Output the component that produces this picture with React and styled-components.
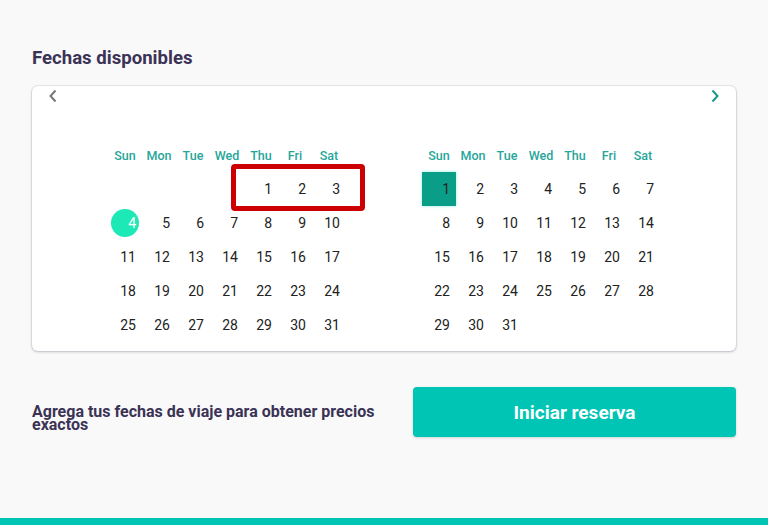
import React from "react";
import styled, { createGlobalStyle } from "styled-components";

const Global = createGlobalStyle`
  body {
    margin: 0;
    background: #f9f9f9;
    font-family: Roboto, "Liberation Sans", sans-serif;
  }
`;

const Page = styled.div`
  min-height: 100vh;
  display: flex;
  flex-direction: column;
`;

const Content = styled.div`
  padding: 47px 32px 0;
`;

const Title = styled.h2`
  margin: 0 0 17px;
  font-size: 18.6px;
  line-height: 22px;
  font-weight: 700;
  color: #3b3355;
`;

const Card = styled.div`
  background: #fff;
  border-radius: 6px;
  box-shadow: 0 0 0 1px rgba(60, 60, 90, 0.08), 0 1px 3px rgba(40, 40, 70, 0.25);
  padding-bottom: 9px;
`;

const Nav = styled.div`
  display: flex;
  justify-content: space-between;
  align-items: center;
  height: 19px;
  padding: 0 15px;
`;

const NavButton = styled.span`
  display: flex;
  width: 12px;
  justify-content: center;
  color: ${(p) => p.color};
`;

const Months = styled.div`
  display: flex;
  justify-content: center;
  gap: 76px;
  margin-top: 33px;
`;

const Month = styled.div`
  position: relative;
  display: grid;
  grid-template-columns: repeat(7, 34px);
  grid-auto-rows: 34px;
`;

const WeekDay = styled.div`
  display: flex;
  align-items: center;
  justify-content: center;
  font-size: 12.5px;
  font-weight: 500;
  color: #26a69a;
`;

const Day = styled.div`
  position: relative;
  display: flex;
  align-items: center;
  justify-content: flex-end;
  padding-right: 6px;
  font-size: 14px;
  color: ${(p) => (p.today ? "#fff" : "#222")};
  background: ${(p) => (p.selected ? "#0a9d88" : "transparent")};
  box-shadow: ${(p) => (p.selected ? "0 0 3px #8ce9dc" : "none")};
  z-index: 0;

  &::before {
    content: "";
    display: ${(p) => (p.today ? "block" : "none")};
    position: absolute;
    left: 3px;
    top: 3px;
    width: 28px;
    height: 28px;
    border-radius: 50%;
    background: #1de9b6;
    z-index: -1;
  }
`;

const Highlight = styled.div`
  position: absolute;
  left: 123px;
  top: 26px;
  width: 134px;
  height: 47px;
  box-sizing: border-box;
  border: 5px solid #cc0000;
  border-radius: 4px;
  pointer-events: none;
`;

const Footer = styled.div`
  display: flex;
  align-items: center;
  gap: 18px;
  margin-top: 36px;
`;

const Hint = styled.p`
  flex: 1;
  margin: 12px 0 0;
  font-size: 16px;
  line-height: 13px;
  font-weight: 700;
  color: #3b3355;
`;

const Button = styled.button`
  width: 323px;
  height: 50px;
  border: none;
  border-radius: 4px;
  background: #00c4b4;
  box-shadow: 0 1px 3px rgba(0, 0, 0, 0.15);
  color: #fff;
  font-family: Roboto, "Liberation Sans", sans-serif;
  font-size: 19px;
  font-weight: 700;
`;

const Bar = styled.div`
  margin-top: auto;
  height: 7px;
  background: #00c4b4;
`;

const WEEK = ["Sun", "Mon", "Tue", "Wed", "Thu", "Fri", "Sat"];

function Chevron({ dir }) {
  return (
    <svg width="10" height="14" viewBox="0 0 10 14">
      <path
        d={dir === "left" ? "M7.5 1.5 L2.5 7 L7.5 12.5" : "M2.5 1.5 L7.5 7 L2.5 12.5"}
        fill="none"
        stroke="currentColor"
        strokeWidth="2"
      />
    </svg>
  );
}

function MonthGrid({ offset, today, selected, children }) {
  const cells = [];
  for (let i = 0; i < offset; i++) cells.push(<div key={"e" + i} />);
  for (let d = 1; d <= 31; d++) {
    cells.push(
      <Day key={d} today={d === today} selected={d === selected}>
        {d}
      </Day>
    );
  }
  return (
    <Month>
      {WEEK.map((w) => (
        <WeekDay key={w}>{w}</WeekDay>
      ))}
      {cells}
      {children}
    </Month>
  );
}

export default function App() {
  return (
    <Page>
      <Global />
      <Content>
        <Title>Fechas disponibles</Title>
        <Card>
          <Nav>
            <NavButton color="#777">
              <Chevron dir="left" />
            </NavButton>
            <NavButton color="#16998a">
              <Chevron dir="right" />
            </NavButton>
          </Nav>
          <Months>
            <MonthGrid offset={4} today={4}>
              <Highlight />
            </MonthGrid>
            <MonthGrid offset={0} selected={1} />
          </Months>
        </Card>
        <Footer>
          <Hint>Agrega tus fechas de viaje para obtener precios exactos</Hint>
          <Button>Iniciar reserva</Button>
        </Footer>
      </Content>
      <Bar />
    </Page>
  );
}
